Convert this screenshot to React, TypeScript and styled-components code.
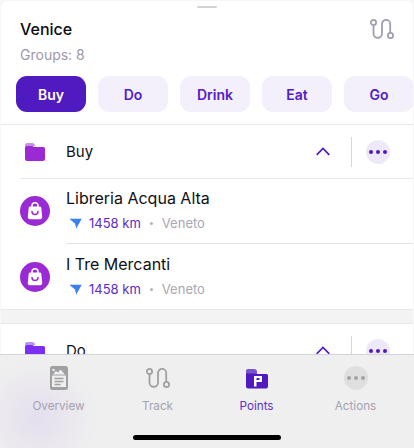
import React from "react";
import styled, { createGlobalStyle } from "styled-components";

const Global = createGlobalStyle`
  html, body { margin: 0; padding: 0; background: #f7f7f8; }
  * { box-sizing: border-box; }
  body { font-family: Inter, "Liberation Sans", sans-serif; }
`;

const Page = styled.div`
  width: 414px;
  height: 448px;
  display: flex;
  flex-direction: column;
  overflow: hidden;
  position: relative;
  background: #f7f7f8;
`;
const Sheet = styled.div`
  flex: 1;
  min-height: 0;
  overflow: hidden;
  margin: 1px 1px 0;
  background: #fff;
  border-radius: 6px 6px 0 0;
`;
const Grabber = styled.div`
  width: 20px;
  height: 2px;
  margin: 5px auto 0;
  background: #d4d3d8;
  border-radius: 1px;
`;
const Header = styled.div`
  display: flex;
  justify-content: space-between;
  padding: 10px 19px 0 19px;
  height: 68px;
`;
const Title = styled.div`
  font-size: 16px;
  line-height: 20px;
  font-weight: 500;
  color: #0b0b0f;
  margin-top: 1px;
`;
const Subtitle = styled.div`
  font-size: 14px;
  line-height: 18px;
  color: #9d99a9;
  margin-top: 7px;
`;
const RouteSlot = styled.div`
  margin-top: 1px;
  display: flex;
`;
const Chips = styled.div`
  display: flex;
  gap: 12px;
  padding-left: 15px;
  height: 48px;
`;
const Chip = styled.div<{ $active?: boolean }>`
  flex: 0 0 70px;
  height: 36px;
  border-radius: 11px;
  display: flex;
  align-items: center;
  justify-content: center;
  font-size: 14px;
  font-weight: 600;
  background: ${(p) => (p.$active ? "#4f1ac0" : "#f3effb")};
  color: ${(p) => (p.$active ? "#fff" : "#5220c6")};
`;
const Group = styled.section`
  border-top: 1px solid #e9e9ec;
`;
const GroupHead = styled.div`
  height: 54px;
  display: flex;
  align-items: center;
  border-bottom: 1px solid #e9e9ec;
  margin-left: 19px;
  padding-left: 5px;
`;
const GroupName = styled.div`
  font-size: 15px;
  color: #111116;
  margin-left: 21px;
  flex: 1;
`;
const Chevron = styled.div`
  width: 14px;
  display: flex;
  margin-right: 21px;
`;
const Sep = styled.div`
  width: 1px;
  height: 30px;
  background: #d6d5d9;
  margin-right: 14px;
`;
const More = styled.div`
  width: 24px;
  height: 24px;
  border-radius: 50%;
  background: #eee9f9;
  margin-right: 23px;
  display: flex;
  align-items: center;
  justify-content: center;
  gap: 3px;
`;
const Dot = styled.span<{ $c?: string }>`
  width: 4px;
  height: 4px;
  border-radius: 50%;
  background: ${(p) => p.$c || "#4f1ac0"};
`;
const Item = styled.div<{ $last?: boolean }>`
  height: ${(p) => (p.$last ? "64px" : "66px")};
  display: flex;
  align-items: flex-start;
  padding-left: 19px;
`;
const Badge = styled.div`
  width: 30px;
  height: 30px;
  margin-top: 17px;
  border-radius: 50%;
  background: #9a2bd4;
  display: flex;
  align-items: center;
  justify-content: center;
  flex: none;
`;
const ItemBody = styled.div<{ $line?: boolean }>`
  flex: 1;
  height: 65px;
  margin-left: 16px;
  padding-top: 9px;
  border-bottom: ${(p) => (p.$line ? "1px solid #e4e4e7" : "none")};
`;
const ItemName = styled.div`
  font-size: 16px;
  line-height: 20px;
  color: #0f0f14;
`;
const Meta = styled.div`
  display: flex;
  align-items: center;
  font-size: 13px;
  line-height: 16px;
  margin-top: 7px;
  margin-left: 3px;
`;
const Km = styled.span`
  color: #5a2bc9;
  margin-left: 7px;
`;
const Bullet = styled.span`
  width: 3px;
  height: 3px;
  border-radius: 50%;
  background: #b5b2bf;
  margin: 0 9px 0 9px;
`;
const Region = styled.span`
  color: #a9a6b4;
`;
const Band = styled.div`
  height: 14px;
  background: #f3f3f4;
  border-top: 1px solid #e9e9ec;
`;
const TabBar = styled.nav`
  flex: 0 0 94px;
  position: relative;
  border-top: 1px solid #d5d3da;
  background:
    radial-gradient(circle at 38px 62px, rgba(205, 185, 235, 0.3), rgba(205, 185, 235, 0) 60px),
    #efefef;
  display: grid;
  grid-template-columns: repeat(4, 99px);
  padding: 10px 0 0 9px;
`;
const Tab = styled.div<{ $active?: boolean }>`
  display: flex;
  flex-direction: column;
  align-items: center;
  color: ${(p) => (p.$active ? "#5f30cc" : "#a5a2af")};
  font-size: 11.7px;
  line-height: 15px;
`;
const TabIcon = styled.div`
  height: 26px;
  display: flex;
  align-items: center;
  justify-content: center;
  margin-bottom: 8px;
`;
const ActionsCircle = styled.div`
  width: 24px;
  height: 24px;
  border-radius: 50%;
  background: #dfdfdf;
  display: flex;
  align-items: center;
  justify-content: center;
  gap: 3px;
`;
const HomeBar = styled.div`
  position: absolute;
  left: 133px;
  bottom: 8px;
  width: 148px;
  height: 5px;
  border-radius: 3px;
  background: #000;
`;

const RouteIcon = ({ color }: { color: string }) => (
  <svg width="24" height="20" viewBox="0 0 24 20" fill="none" stroke={color} strokeWidth="1.800">
    <circle cx="3.500" cy="3.500" r="2.600" />
    <circle cx="20.500" cy="16.500" r="2.600" />
    <path d="M3.500 6.100v8.400a4.250 4.250 0 0 0 8.500 0V5a4.100 4.100 0 0 1 8.200 0v8.900" />
  </svg>
);

const FolderIcon = ({ back, front }: { back: string; front: string }) => (
  <svg width="20" height="19" viewBox="0 0 20 19">
    <path d="M0 3a2 2 0 0 1 2-2h5a3 3 0 0 1 3 3h-10z" fill={back} />
    <path d="M0 5.500a1.500 1.500 0 0 1 1.500-1.500h6l1.500 1h9.500a1.500 1.500 0 0 1 1.500 1.500v10.500a2 2 0 0 1-2 2h-16a2 2 0 0 1-2-2z" fill={front} />
  </svg>
);

const ChevronUp = () => (
  <svg width="14" height="9" viewBox="0 0 14 9" fill="none" stroke="#4f1ac0" strokeWidth="1.700">
    <path d="M.7 7.800 7 1.500l6.300 6.300" />
  </svg>
);

const BagIcon = () => (
  <svg width="16" height="18" viewBox="0 0 16 18" fill="none">
    <path d="M5 5V3.800a3 3 0 0 1 6 0V5" stroke="#fff" strokeWidth="1.500" />
    <path d="M3.200 4.500h9.600a1.500 1.500 0 0 1 1.500 1.300l.9 9a2.200 2.200 0 0 1-2.200 2.400H3a2.200 2.200 0 0 1-2.200-2.400l.9-9a1.500 1.500 0 0 1 1.500-1.300z" fill="#fff" />
    <path d="M5 9.500a3 3 0 0 0 6 0" stroke="#9a2bd4" strokeWidth="1.500" strokeLinecap="round" />
  </svg>
);

const Arrow = () => (
  <svg width="13" height="11" viewBox="0 0 13 11">
    <path d="M.3.800h12.400L7.300 10.500 6 5.600z" fill="#3a80f5" />
  </svg>
);

const OverviewIcon = () => (
  <svg width="18" height="24" viewBox="0 0 18 24">
    <rect width="18" height="24" rx="2.500" fill="#a0a0a2" />
    <path d="M3 8.500 6 5l2 1.500L10.500 3.500 15 8.500z" fill="#efefef" />
    <circle cx="3.500" cy="4" r="1.200" fill="#efefef" />
    <rect x="2" y="9.500" width="14" height="11.500" fill="#efefef" />
    <path d="M4.500 12.500h9M4.500 15.500h9M4.500 18.500h6" stroke="#a0a0a2" strokeWidth="1.300" />
  </svg>
);

const PointsIcon = () => (
  <svg width="22" height="21" viewBox="0 0 22 21">
    <path d="M0 3a2 2 0 0 1 2-2h6a3 3 0 0 1 3 3v2h-11z" fill="#7a51cf" />
    <path d="M0 5.500h9l1 .5h10.500a1.500 1.500 0 0 1 1.500 1.500v11a2 2 0 0 1-2 2h-18a2 2 0 0 1-2-2z" fill="#4f1ac0" />
    <path d="M8 8h7.500a.5.5 0 0 1 .5.5v5a.5.5 0 0 1-.5.5h-5v4.500H8z" fill="#fff" />
    <rect x="10.500" y="10" width="3" height="2" fill="#4f1ac0" />
  </svg>
);

const chips = ["Buy", "Do", "Drink", "Eat", "Go"];
const items = ["Libreria Acqua Alta", "I Tre Mercanti"];

export default function App() {
  return (
    <Page>
      <Global />
      <Sheet>
        <Grabber />
        <Header>
          <div>
            <Title>Venice</Title>
            <Subtitle>Groups: 8</Subtitle>
          </div>
          <RouteSlot>
            <RouteIcon color="#a29eae" />
          </RouteSlot>
        </Header>
        <Chips>
          {chips.map((c, i) => (
            <Chip key={c} $active={i === 0}>
              {c}
            </Chip>
          ))}
        </Chips>
        <Group>
          <GroupHead>
            <FolderIcon back="#c88fe6" front="#9a2bd4" />
            <GroupName>Buy</GroupName>
            <Chevron>
              <ChevronUp />
            </Chevron>
            <Sep />
            <More>
              <Dot />
              <Dot />
              <Dot />
            </More>
          </GroupHead>
          {items.map((name, i) => (
            <Item key={name} $last={i === items.length - 1}>
              <Badge>
                <BagIcon />
              </Badge>
              <ItemBody $line={i === 0}>
                <ItemName>{name}</ItemName>
                <Meta>
                  <Arrow />
                  <Km>1458 km</Km>
                  <Bullet />
                  <Region>Veneto</Region>
                </Meta>
              </ItemBody>
            </Item>
          ))}
        </Group>
        <Band />
        <Group>
          <GroupHead>
            <FolderIcon back="#b794f6" front="#7c2ff0" />
            <GroupName>Do</GroupName>
            <Chevron>
              <ChevronUp />
            </Chevron>
            <Sep />
            <More>
              <Dot />
              <Dot />
              <Dot />
            </More>
          </GroupHead>
        </Group>
      </Sheet>
      <TabBar>
        <Tab>
          <TabIcon>
            <OverviewIcon />
          </TabIcon>
          Overview
        </Tab>
        <Tab>
          <TabIcon>
            <RouteIcon color="#a0a0a2" />
          </TabIcon>
          Track
        </Tab>
        <Tab $active>
          <TabIcon>
            <PointsIcon />
          </TabIcon>
          Points
        </Tab>
        <Tab>
          <TabIcon>
            <ActionsCircle>
              <Dot $c="#a3a3a5" />
              <Dot $c="#a3a3a5" />
              <Dot $c="#a3a3a5" />
            </ActionsCircle>
          </TabIcon>
          Actions
        </Tab>
        <HomeBar />
      </TabBar>
    </Page>
  );
}
